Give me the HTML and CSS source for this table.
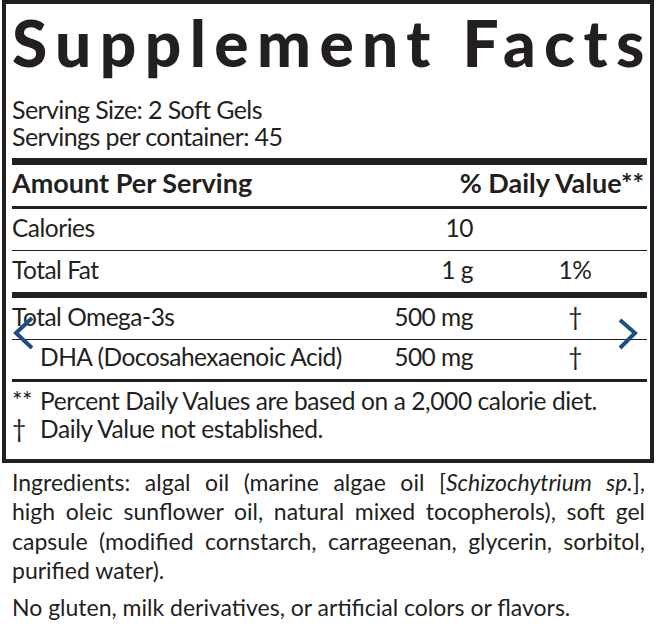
FILE: index.html
```html
<!DOCTYPE html>
<html lang="en">
<head>
<meta charset="utf-8">
<title>Supplement Facts</title>
<link rel="stylesheet" href="styles.css">
</head>
<body>
<div class="page">
  <section class="label">
    <h1 class="title">Supplement Facts</h1>
    <div class="serving">
      <p>Serving Size: 2 Soft Gels</p>
      <p>Servings per container: 45</p>
    </div>
    <div class="bar bar-heavy"></div>
    <div class="row row-head">
      <span class="name">Amount Per Serving</span>
      <span class="dv">% Daily Value**</span>
    </div>
    <div class="bar bar-mid"></div>
    <div class="row">
      <span class="name">Calories</span>
      <span class="amt">10</span>
      <span class="pct"></span>
    </div>
    <div class="bar bar-thin"></div>
    <div class="row">
      <span class="name">Total Fat</span>
      <span class="amt">1 g</span>
      <span class="pct">1%</span>
    </div>
    <div class="bar bar-bold"></div>
    <div class="row">
      <span class="name">Total Omega-3s</span>
      <span class="amt">500 mg</span>
      <span class="pct">†</span>
    </div>
    <div class="bar bar-thin"></div>
    <div class="row row-sub">
      <span class="name">DHA (Docosahexaenoic Acid)</span>
      <span class="amt">500 mg</span>
      <span class="pct">†</span>
    </div>
    <div class="bar bar-mid"></div>
    <div class="notes">
      <span class="mark">**</span><span>Percent Daily Values are based on a 2,000 calorie diet.</span>
      <span class="mark">†</span><span>Daily Value not established.</span>
    </div>
  </section>
  <div class="ingredients">
    <p class="just"><span class="line">Ingredients: algal oil (marine algae oil [<i>Schizochytrium sp.</i>],</span><span class="line">high oleic sunflower oil, natural mixed tocopherols), soft gel</span><span class="line">capsule (modified cornstarch, carrageenan, glycerin, sorbitol,</span><span class="last">purified water).</span></p>
    <p>No gluten, milk derivatives, or artificial colors or flavors.</p>
  </div>
  <button class="nav nav-prev" type="button" aria-label="Previous">
    <svg width="24" height="40" viewBox="0 0 24 40"><polyline points="20,4 4,19 20,34" /></svg>
  </button>
  <button class="nav nav-next" type="button" aria-label="Next">
    <svg width="28" height="40" viewBox="0 0 28 40"><polyline points="8,6 23,19 8,34" /></svg>
  </button>
</div>
</body>
</html>
```
FILE: styles.css
```css
html, body { margin: 0; padding: 0; background: #fff; }
body { font-family: Lato, "Liberation Sans", sans-serif; color: #231f20; }
.page { position: relative; width: 656px; height: 637px; overflow: hidden; }
.label { margin-left: 2px; width: 652px; box-sizing: border-box; border: 4px solid #231f20; padding: 0 3px 16px 6px; }
.title { margin: 0; font-weight: 900; font-size: 64px; line-height: 78px; letter-spacing: 8.4px; white-space: nowrap; }
.serving { padding-top: 14px; font-size: 25px; line-height: 27px; letter-spacing: -0.6px; }
.serving p { margin: 0; }
.bar { background: #231f20; }
.bar-heavy { height: 7px; margin-top: 8px; }
.bar-mid { height: 3px; }
.bar-thin { height: 1px; }
.bar-bold { height: 6px; }
.row { display: grid; grid-template-columns: minmax(0, 1fr) 140px 174px; align-items: baseline; font-size: 24.5px; letter-spacing: -0.5px; line-height: 38px; padding-bottom: 3px; white-space: nowrap; }
.row .amt { text-align: right; }
.row .pct { text-align: center; padding-left: 30px; }
.row-head { grid-template-columns: minmax(0, 1fr) auto; font-size: 27px; letter-spacing: 0; font-weight: 700; line-height: 36px; padding-bottom: 5px; }
.row-head .dv { padding-right: 3px; }
.row-sub { line-height: 33px; padding-bottom: 6px; }
.row-sub .name { padding-left: 28px; }
.notes { display: grid; grid-template-columns: 28px 1fr; padding-top: 5px; font-size: 24.5px; letter-spacing: -0.4px; line-height: 28px; white-space: nowrap; }
.ingredients { padding: 5px 11px 0 12px; font-size: 23px; line-height: 29.3px; }
.ingredients p { margin: 0 0 8px; }
.just .line { display: block; white-space: nowrap; text-align: justify; text-align-last: justify; }
.just .last { display: block; }
.nav { position: absolute; padding: 0; border: 0; background: none; }
.nav svg { display: block; fill: none; stroke: #1d4f85; stroke-width: 4; }
.nav-prev { left: 12px; top: 314px; }
.nav-next { left: 612px; top: 314px; }
```
